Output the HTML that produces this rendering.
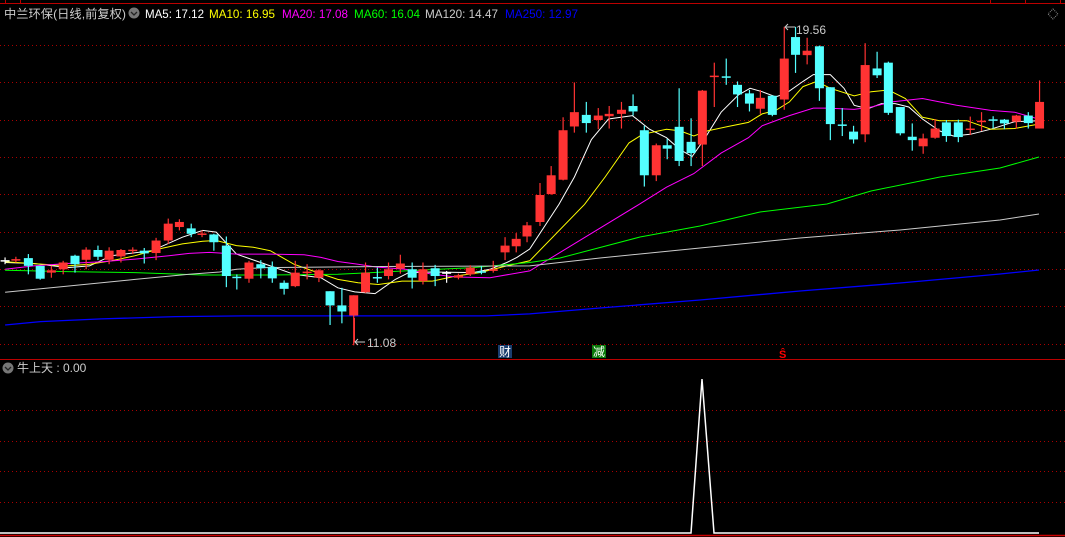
<!DOCTYPE html>
<html><head><meta charset="utf-8"><style>
html,body{margin:0;padding:0;background:#000;width:1065px;height:537px;overflow:hidden}
svg{display:block}
text{font-family:"Liberation Sans","Noto Sans CJK SC",sans-serif}
</style></head><body>
<svg id="s" width="1065" height="537" viewBox="0 0 1065 537" xmlns="http://www.w3.org/2000/svg">
<rect width="1065" height="537" fill="#000"/>
<line x1="0" y1="3.5" x2="1065" y2="3.5" stroke="#b00" stroke-width="1"/>
<g stroke="#b00"><line x1="5.5" y1="0" x2="5.5" y2="3"/><line x1="20.5" y1="0" x2="20.5" y2="3"/><line x1="990.5" y1="0" x2="990.5" y2="3"/><line x1="1025.5" y1="0" x2="1025.5" y2="3"/><line x1="1060.5" y1="0" x2="1060.5" y2="3"/></g>
<g id="grid" stroke="#a00" stroke-width="1" stroke-dasharray="1,3"></g>
<line x1="0" y1="359.5" x2="1065" y2="359.5" stroke="#b00"/>
<line x1="0" y1="535.5" x2="1065" y2="535.5" stroke="#c00" stroke-width="1.5"/>
<g id="ma"></g>
<g id="k"></g>
<text x="4" y="18" font-size="12" fill="#ccc" textLength="122" lengthAdjust="spacingAndGlyphs">中兰环保(日线,前复权)</text>
<circle cx="134" cy="13" r="5.5" fill="#777"/><path d="M131 12 l3 3 l3 -3" stroke="#222" stroke-width="1.3" fill="none"/>
<text x="145" y="18" font-size="12" fill="#fff" textLength="59" lengthAdjust="spacingAndGlyphs">MA5: 17.12</text>
<text x="209" y="18" font-size="12" fill="#ff0" textLength="66" lengthAdjust="spacingAndGlyphs">MA10: 16.95</text>
<text x="282" y="18" font-size="12" fill="#f0f" textLength="66" lengthAdjust="spacingAndGlyphs">MA20: 17.08</text>
<text x="354" y="18" font-size="12" fill="#0f0" textLength="66" lengthAdjust="spacingAndGlyphs">MA60: 16.04</text>
<text x="425" y="18" font-size="12" fill="#ccc" textLength="73" lengthAdjust="spacingAndGlyphs">MA120: 14.47</text>
<text x="505" y="18" font-size="12" fill="#00f" textLength="73" lengthAdjust="spacingAndGlyphs">MA250: 12.97</text>
<path d="M1053 9 l5 5 l-5 5 l-5 -5z" stroke="#888" fill="none" stroke-dasharray="1,1"/>
<line x1="354.5" y1="318" x2="354.5" y2="342" stroke="#f33"/>
<path d="M365 342 H355 M358 339 l-3 3 l3 3" stroke="#ccc" fill="none"/>
<text x="367" y="347" font-size="12" fill="#ccc">11.08</text>
<path d="M795 27 H786 M788 24 l-3 3 l3 3" stroke="#ccc" fill="none"/>
<text x="796" y="34" font-size="12" fill="#ccc">19.56</text>
<rect x="498" y="345" width="14" height="13" fill="#1a3d6e"/><text x="499" y="356" font-size="12" fill="#fff">财</text>
<rect x="592" y="345" width="14" height="13" fill="#0a7a0a"/><text x="593" y="356" font-size="12" fill="#fff">减</text>
<text x="779" y="358" font-size="11" font-weight="bold" fill="#f00">Ŝ</text>
<circle cx="8" cy="368" r="5.5" fill="#777"/><path d="M5 367 l3 3 l3 -3" stroke="#222" stroke-width="1.3" fill="none"/>
<text x="17" y="372" font-size="12" fill="#ccc">牛上天 : 0.00</text>
<path d="M0 533 H691 L702 379 L714 533 H1039" stroke="#fff" stroke-width="1.5" fill="none"/>
</svg>
<script>
var NS="http://www.w3.org/2000/svg";
function el(p,t,a){var e=document.createElementNS(NS,t);for(var k in a)e.setAttribute(k,a[k]);document.getElementById(p).appendChild(e);return e;}
[45,82,120,157,194,232,269,306,344,410,441,471,502].forEach(function(y){el("grid","line",{x1:0,y1:y+.5,x2:1065,y2:y+.5});});
var z2=[[15,178,182,170,190,'w'],[47,175,177,168,185,'r'],[84,172,195,160,220,'c'],[119,195,233,195,236,'c'],[152,208,215,195,230,'r'],[187,185,205,180,220,'r'],[222,165,190,162,215,'c'],[255,147,177,140,205,'r'],[290,148,168,135,178,'c'],[323,150,177,140,190,'r'],[358,148,167,145,185,'r'],[393,147,149,140,160,'r'],[427,150,158,142,188,'c'],[462,120,157,112,178,'r'],[498,70,120,55,130,'r'],[531,65,80,57,90,'r'],[566,84,100,70,110,'c'],[598,99,101,90,110,'r'],[633,102,125,100,150,'c'],[670,135,225,108,258,'c'],[701,227,230,220,265,'c'],[737,185,233,180,245,'r'],[772,190,202,178,232,'c'],[806,198,232,182,245,'c'],[841,245,263,238,280,'c'],[874,215,255,180,258,'r'],[909,212,214,190,235,'r'],[944,208,230,205,243,'r'],[977,270,312,270,370,'c'],[1012,312,330,260,365,'c'],[1047,282,342,282,430,'r'],[1082,215,273,185,275,'r'],[1117,228,232,200,245,'c'],[1150,205,225,185,235,'r'],[1185,188,203,162,218,'r'],[1220,205,230,185,262,'c'],[1252,205,240,185,250,'r'],[1288,202,225,192,255,'c'],[1322,214,217,210,245,'w'],[1357,223,230,218,235,'r'],[1392,200,220,193,225,'r'],[1425,211,214,195,220,'c'],[1460,205,210,180,215,'r'],[1495,135,155,110,178,'r'],[1528,115,137,98,155,'r'],[1560,75,108,65,125,'r']];
var z3=[[30,175,205,140,210,'r'],[62,455,510,428,512,'r'],[97,323,468,285,470,'r'],[130,270,312,183,330,'r'],[165,278,302,240,330,'c'],[200,280,293,258,320,'r'],[232,275,282,252,318,'r'],[268,263,275,240,318,'r'],[302,252,268,218,280,'c'],[335,323,455,310,488,'c'],[370,367,455,362,472,'r'],[402,367,377,348,408,'c'],[437,313,413,200,428,'c'],[472,357,390,288,428,'c'],[505,207,365,205,428,'r'],[540,163,167,125,255,'r'],[575,165,169,113,190,'c'],[608,190,218,180,255,'c'],[643,215,245,205,268,'c'],[675,228,260,205,275,'r'],[710,222,278,220,282,'c'],[745,113,233,20,263,'r'],[778,50,102,20,155,'c'],[812,90,103,52,130,'r'],[848,77,200,75,237,'c'],[880,197,305,197,352,'c'],[915,306,310,258,340,'c'],[948,327,350,310,362,'c'],[982,132,335,68,358,'r'],[1017,142,162,93,170,'c'],[1050,125,272,122,278,'c'],[1085,255,332,255,338,'c'],[1120,342,352,303,383,'c'],[1152,347,370,333,392,'r'],[1187,318,345,290,348,'r'],[1220,300,340,293,357,'c'],[1255,300,343,292,358,'c'],[1290,318,322,283,337,'r'],[1323,295,299,270,325,'r'],[1357,291,295,282,318,'c'],[1390,292,303,290,320,'c'],[1425,280,298,278,318,'r'],[1460,280,302,270,318,'c'],[1493,240,318,177,318,'r']];
var col={r:'#ff3333',c:'#54ffff',w:'#ffffff'};
function draw(x,t,b,h,l,c){var cc=col[c];el("k","line",{x1:x,y1:h,x2:x,y2:l,stroke:cc,"stroke-width":1.2});el("k","rect",{x:x-4.5,y:t,width:9,height:Math.max(1.5,b-t),fill:cc});}
z2.forEach(function(d){var f=function(v){return 200+v/2.96};draw(d[0]/2.96,f(d[1]),f(d[2]),f(d[3]),f(d[4]),d[5]);});
z3.forEach(function(d,i){var f=function(v){return 20+v/2.93};if(i==0){draw(540,195,222,183,226,'r');return;}draw(530+d[0]/2.93,f(d[1]),f(d[2]),f(d[3]),f(d[4]),d[5]);});
function line(a2,a3,extra,c,w){var pts=[];a2.forEach(function(p){pts.push([p[0]/2.96,200+p[1]/2.96]);});a3.forEach(function(p){pts.push([530+p[0]/2.93,20+p[1]/2.93]);});(extra||[]).forEach(function(p){pts.push(p)});el("ma","polyline",{points:pts.map(function(p){return p[0].toFixed(1)+","+p[1].toFixed(1)}).join(" "),fill:"none",stroke:c,"stroke-width":w||1});}
line([[15,185],[100,188],[200,200],[265,195],[330,165],[450,150],[540,110],[600,90],[640,95],[700,160],[800,195],[870,220],[910,225],[950,230],[1000,260],[1050,272],[1110,277],[1170,235],[1210,215],[1280,213],[1400,215],[1450,205],[1500,185],[1530,170],[1568,145]],[[85,540],[130,460],[180,350],[230,290],[300,280],[350,320],[400,345],[440,380],[475,400],[510,350],[560,270],[610,220],[645,200],[680,210],[720,225],[750,215],[800,180],[830,160],[880,160],[920,200],[950,250],[990,260],[1030,245],[1070,245],[1110,255],[1150,290],[1200,325],[1240,340],[1290,335],[1350,320],[1420,298],[1490,295]],null,"#fff");
line([[15,183],[200,195],[265,190],[330,180],[400,165],[470,145],[540,130],[600,122],[640,120],[700,135],[750,140],[800,150],[870,190],[940,215],[1000,235],[1060,245],[1120,250],[1190,240],[1280,240],[1350,225],[1420,215],[1500,195],[1568,180]],[[160,540],[220,460],[290,360],[330,335],[400,320],[440,325],[480,340],[520,325],[580,312],[640,300],[680,275],[720,265],[760,240],[800,195],[840,180],[880,200],[950,222],[1000,210],[1050,205],[1100,230],[1150,285],[1200,295],[1280,295],[1350,320],[1420,318],[1490,305]],null,"#ff0");
line([[15,205],[100,195],[200,188],[300,183],[400,175],[500,165],[560,158],[620,155],[700,160],[800,160],[900,162],[950,170],[1000,182],[1060,190],[1110,198],[1200,205],[1280,220],[1350,228],[1450,230],[1568,210]],[[320,540],[400,490],[480,450],[560,390],[640,345],[680,310],[760,280],[830,258],[870,258],[950,262],[1000,255],[1060,240],[1150,230],[1250,250],[1350,265],[1420,270],[1490,290]],null,"#f0f");
line([[15,208],[200,212],[400,215],[600,222],[800,222],[1000,220],[1200,210],[1400,200],[1568,185]],[],[[560,258],[640,237],[700,226],[760,212],[827,204],[871,191],[940,177],[1000,168],[1039,157]],"#0f0");
line([[15,273],[200,255],[400,235],[560,220],[650,213],[700,205],[780,200],[1100,197],[1568,195]],[],[[600,258],[700,248],[800,238],[900,230],[1000,220],[1039,214]],"#ccc");
line([[15,370],[120,360],[300,352],[520,345],[720,343],[1440,343],[1568,337]],[],[[600,308],[700,300],[800,291],[900,283],[1000,274],[1039,270]],"#00f",1.3);
</script>
</body></html>
